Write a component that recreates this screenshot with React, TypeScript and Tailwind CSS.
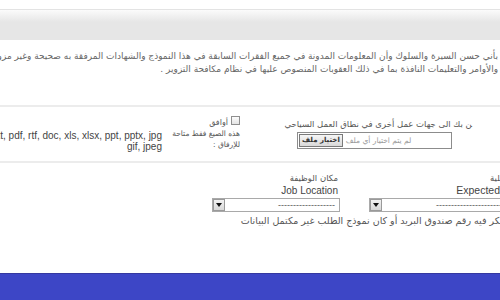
import React from "react";

const ar = "font-['DejaVu_Sans',sans-serif]";
const lat = "font-['Liberation_Sans',Arial,sans-serif]";

function Select({ className = "", text }: { className?: string; text: string }) {
  return (
    <div dir="rtl" className={`flex h-[14px] items-center border border-[#a9a9a9] bg-white ${className}`}>
      <span className={`flex-1 truncate pr-[4px] text-[9px] leading-none text-[#555] ${lat}`}>{text}</span>
      <span className="flex h-[12px] w-[12px] items-center justify-center border border-[#9a9a9a] bg-[linear-gradient(#f2f2f2,#d8d8d8)]">
        <span className="h-0 w-0 border-x-[3px] border-t-[4px] border-x-transparent border-t-[#111]" />
      </span>
    </div>
  );
}

export default function App() {
  return (
    <div className="flex h-[300px] w-[500px] flex-col overflow-hidden bg-white">
      <div className="h-[9px]" />
      <div className="h-[31px] border-t border-[#e3e3e3] bg-[linear-gradient(#fbfbfb,#e6e6e6_40%,#e6e6e6)]" />

      {/* declaration paragraph */}
      <div dir="rtl" className={`mt-[10px] whitespace-nowrap pr-[2px] text-[9px] leading-[13px] text-[#666] ${ar}`}>
        <div>
          بأني حسن السيرة والسلوك وأن المعلومات المدونة في جميع الفقرات السابقة في هذا النموذج والشهادات المرفقة به صحيحة وغير مزورة وألتزم بجميع الأنظمة
        </div>
        <div>والأوامر والتعليمات النافذة بما في ذلك العقوبات المنصوص عليها في نظام مكافحة التزوير .</div>
      </div>

      <div className="mt-[29px] h-[2px] bg-[#ececec]" />

      {/* attachment row */}
      <div className="flex h-[54px]">
        <div dir="rtl" className={`w-[162px] shrink-0 whitespace-nowrap pt-[23px] text-[10px] leading-[11px] text-[#444] ${lat}`}>
          <div>txt, pdf, rtf, doc, xls, xlsx, ppt, pptx, jpg,</div>
          <div>gif, jpeg</div>
        </div>
        <div dir="rtl" className={`ml-[20px] w-[58px] shrink-0 whitespace-nowrap pt-[5px] text-[7.5px] leading-[11px] text-[#555] ${ar}`}>
          <div className="flex items-center gap-[3px]">
            <span className="h-[9px] w-[9px] border border-[#8f8f8f] bg-[linear-gradient(#fdfdfd,#e4e4e4)]" />
            <span className="pt-[5px] text-[8px]">أوافق</span>
          </div>
          <div>هذه الصيغ فقط متاحة</div>
          <div>للإرفاق :</div>
        </div>
        <div className="flex w-[232px] shrink-0 flex-col pt-[11px]">
          <div dir="rtl" className={`whitespace-nowrap text-[8.5px] leading-[12px] text-[#555] ${ar}`}>
            ‍ن بك الى جهات عمل أخرى في نطاق العمل السياحي
          </div>
          <div className="ml-[57px] mt-[2px] flex h-[17px] w-[155px] items-center gap-[3px] border border-[#8c8c8c] bg-white px-[1px]">
            <span className={`border border-[#7a7a7a] bg-[linear-gradient(#f6f6f6,#d9d9d9)] px-[2px] text-[7px] font-bold leading-[11px] text-[#333] ${ar}`}>
              اختيار ملف
            </span>
            <span dir="rtl" className={`text-[7.5px] text-[#999] ${ar}`}>لم يتم اختيار أي ملف</span>
          </div>
        </div>
      </div>

      <div className="h-[2px] bg-[#ececec]" />

      {/* job row */}
      <div className="flex pt-[10px]">
        <div className="ml-[212px] w-[128px] shrink-0">
          <div dir="rtl" className={`pr-[2px] text-[8.5px] leading-[11px] text-[#555] ${ar}`}>مكان الوظيفة</div>
          <div className={`pr-[2px] text-right text-[10px] leading-[13px] text-[#444] ${lat}`}>Job Location</div>
          <Select className="mt-[1px]" text="-------------------" />
        </div>
        <div className="ml-[29px] w-[131px] shrink-0">
          <div dir="rtl" className={`text-[8.5px] leading-[11px] text-[#555] ${ar}`}>‍لية</div>
          <div className={`text-right text-[10.5px] leading-[13px] text-[#444] ${lat}`}>Expected</div>
          <Select className="mt-[1px] w-[150px]" text="--------------------------" />
        </div>
      </div>
      <div dir="rtl" className={`mt-[3px] whitespace-nowrap text-[9.5px] leading-[12px] text-[#555] ${ar}`}>
        ‍كر فيه رقم صندوق البريد أو كان نموذج الطلب غير مكتمل البيانات
      </div>

      <div className="mt-auto h-[27px] border-t border-[#3538a0] bg-[#3d46c6]" />
    </div>
  );
}
